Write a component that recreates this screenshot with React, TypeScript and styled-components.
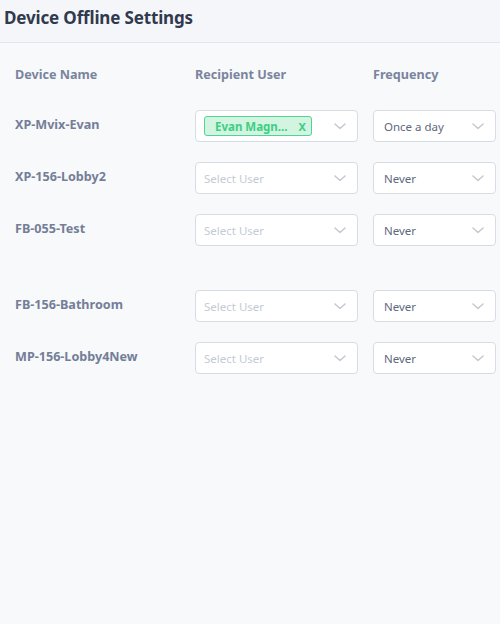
import { Fragment } from 'react'
import styled, { createGlobalStyle } from 'styled-components'

const GlobalStyle = createGlobalStyle`
  html, body {
    margin: 0;
    padding: 0;
    background: #f8f9fb;
    font-family: 'Noto Sans', 'Open Sans', sans-serif;
  }
`

const Page = styled.div`
  width: 500px;
  height: 624px;
  background: #f8f9fb;
  overflow: hidden;
`

const Header = styled.header`
  height: 43px;
  box-sizing: border-box;
  padding: 0 4px;
  display: flex;
  align-items: center;
  background: #f5f6f9;
  border-bottom: 1px solid #e3e6ee;
`

const Title = styled.h1`
  margin: 0 0 8px;
  font-size: 17px;
  font-weight: 700;
  color: #2f3a4f;
  letter-spacing: -0.15px;
`

const Table = styled.div`
  display: grid;
  grid-template-columns: 180px 178px 122px;
  padding: 20px 0 0 15px;
  row-gap: 20px;
`

const HeadCell = styled.div`
  font-size: 12.6px;
  font-weight: 700;
  color: #7a849d;
  height: 24px;
  line-height: 24px;
  margin-bottom: 3px;
`

const NameCell = styled.div`
  font-size: 12.6px;
  font-weight: 700;
  color: #747e97;
  padding-top: 6px;
  height: 32px;
  box-sizing: border-box;
`

const Spacer = styled.div`
  grid-column: 1 / -1;
  height: 4px;
`

const Select = styled.div<{ $width: number }>`
  width: ${(p) => p.$width}px;
  height: 32px;
  box-sizing: border-box;
  border: 1px solid #d8dce4;
  border-radius: 4px;
  background: #fff;
  display: flex;
  align-items: center;
  padding: 0 10px 0 8px;
  gap: 6px;
`

const Value = styled.span<{ $placeholder?: boolean }>`
  flex: 1;
  font-size: 11.5px;
  color: ${(p) => (p.$placeholder ? '#c5cad4' : '#5f6880')};
  white-space: nowrap;
  padding-left: ${(p) => (p.$placeholder ? 0 : 2)}px;
`

const Tag = styled.span`
  flex: none;
  display: inline-flex;
  align-items: center;
  gap: 11px;
  height: 20px;
  box-sizing: border-box;
  padding: 0 5px 0 10px;
  background: #d2f4e1;
  border: 1px solid #4fd493;
  border-radius: 3px;
  color: #3ccf83;
  font-size: 11.5px;
  font-weight: 700;
`

const TagRemove = styled.span`
  font-size: 11px;
  font-weight: 700;
`

const TagWrap = styled.div`
  flex: 1;
  display: flex;
`

const Chevron = () => (
  <svg width="14" height="14" viewBox="0 0 14 14" fill="none">
    <path d="M2 5l5 4.5L12 5" stroke="#c6cad2" strokeWidth="1.6" strokeLinecap="round" strokeLinejoin="round" />
  </svg>
)

type Row = { name: string; user?: string; freq: string; gapBefore?: boolean }

const rows: Row[] = [
  { name: 'XP-Mvix-Evan', user: 'Evan Magn...', freq: 'Once a day' },
  { name: 'XP-156-Lobby2', freq: 'Never' },
  { name: 'FB-055-Test', freq: 'Never' },
  { name: 'FB-156-Bathroom', freq: 'Never', gapBefore: true },
  { name: 'MP-156-Lobby4New', freq: 'Never' },
]

export default function App() {
  return (
    <Page>
      <GlobalStyle />
      <Header>
        <Title>Device Offline Settings</Title>
      </Header>
      <Table>
        <HeadCell>Device Name</HeadCell>
        <HeadCell>Recipient User</HeadCell>
        <HeadCell>Frequency</HeadCell>
        {rows.map((r) => (
          <Fragment key={r.name}>
            {r.gapBefore && <Spacer />}
            <NameCell>{r.name}</NameCell>
            <Select $width={163}>
              {r.user ? (
                <TagWrap>
                  <Tag>
                    {r.user}
                    <TagRemove>X</TagRemove>
                  </Tag>
                </TagWrap>
              ) : (
                <Value $placeholder>Select User</Value>
              )}
              <Chevron />
            </Select>
            <Select $width={123}>
              <Value>{r.freq}</Value>
              <Chevron />
            </Select>
          </Fragment>
        ))}
      </Table>
    </Page>
  )
}
